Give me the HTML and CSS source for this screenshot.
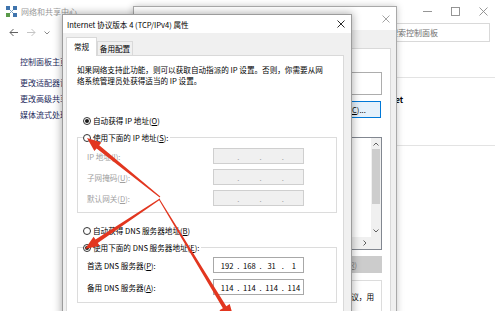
FILE: index.html
```html
<!DOCTYPE html>
<html lang="zh-CN">
<head>
<meta charset="UTF-8">
<title>Internet 协议版本 4 (TCP/IPv4) 属性</title>
<link rel="stylesheet" href="styles.css">
</head>
<body>
<div class="desk">

    <!-- 网络和共享中心 -->
    <div class="win main-win">
        <div class="bar">
            <svg class="app-ico" viewBox="0 0 11 11">
                <path d="M2.5 2.5L8.5 8.5M8.5 2.5L2.5 8.5" stroke="#7fa7c9" stroke-width="1"/>
                <rect x="0" y="0" width="4" height="4" fill="#3f74ad"/>
                <rect x="7" y="0" width="4" height="4" fill="#3f74ad"/>
                <rect x="0" y="7" width="4" height="4" fill="#5a9a4a"/>
                <rect x="7" y="7" width="4" height="4" fill="#3f74ad"/>
            </svg>
            <span class="bar-title">网络和共享中心</span>
            <div class="ctrls">
                <span class="ctrl"><svg viewBox="0 0 9 9"><path d="M0 4.5h9"/></svg></span>
                <span class="ctrl"><svg viewBox="0 0 9 9"><rect x="0.5" y="0.5" width="8" height="8"/></svg></span>
                <span class="ctrl"><svg viewBox="0 0 9 9"><path d="M0.5 0.5l8 8M8.5 0.5l-8 8"/></svg></span>
            </div>
        </div>
        <div class="nav">
            <svg class="nav-ico back" viewBox="0 0 9 9"><path d="M9 4.5H1M4.5 1L1 4.5 4.5 8"/></svg>
            <svg class="nav-ico fwd" viewBox="0 0 9 9"><path d="M0 4.5h8M4.5 1L8 4.5 4.5 8"/></svg>
            <svg class="nav-ico chev" viewBox="0 0 6 4"><path d="M0.5 0.5l2.5 2.5 2.5-2.5"/></svg>
            <div class="search">搜索控制面板</div>
        </div>
        <div class="cp-body">
            <ul class="side">
                <li class="home">控制面板主页</li>
                <li>更改适配器设置</li>
                <li>更改高级共享设置</li>
                <li>媒体流式处理选项</li>
            </ul>
            <div class="cp-main">
                <div class="rule"></div>
                <div class="conn">
                    <b>Internet</b>
                    <span class="conn-link">以太网</span>
                </div>
                <div class="rule second"></div>
            </div>
        </div>
    </div>

    <!-- 以太网 属性 -->
    <div class="win prop-win">
        <div class="bar prop-bar">
            <span class="bar-title">以太网 属性</span>
            <span class="x-btn dim"><svg viewBox="0 0 8 8"><path d="M0.5 0.5l7 7M7.5 0.5l-7 7"/></svg></span>
        </div>
        <div class="prop-body">
            <div class="tabs">
                <span class="tab on">网络</span>
                <span class="tab">共享</span>
            </div>
            <div class="panel prop-panel">
                <p class="lbl">连接时使用:</p>
                <div class="adapter">Realtek PCIe GbE Family Controller</div>
                <div class="btn-row"><span class="btn focus">配置(<u>C</u>)...</span></div>
                <p class="lbl">此连接使用下列项目(<u>O</u>):</p>
                <div class="listbox">
                    <ul class="items">
                        <li>Microsoft 网络客户端</li>
                        <li>Microsoft 网络的文件和打印机共享</li>
                        <li>QoS 数据包计划程序</li>
                        <li>Internet 协议版本 4 (TCP/IPv4)</li>
                    </ul>
                    <div class="vscroll">
                        <svg class="sc-arrow" viewBox="0 0 6 4"><path d="M0.5 3.5l2.5-2.5 2.5 2.5"/></svg>
                        <span class="thumb"></span>
                        <svg class="sc-arrow down" viewBox="0 0 6 4"><path d="M0.5 0.5l2.5 2.5 2.5-2.5"/></svg>
                    </div>
                    <div class="hscroll">
                        <svg class="sc-arrow right" viewBox="0 0 4 6"><path d="M0.5 0.5l2.5 2.5-2.5 2.5"/></svg>
                    </div>
                    <div class="corner"></div>
                </div>
                <div class="btn-row"><span class="btn grey">属性(<u>R</u>)</span></div>
                <div class="desc-box">传输控制协议/Internet 协议。该协议是默认的广域网络协议，用</div>
            </div>
        </div>
    </div>

    <!-- Internet 协议版本 4 (TCP/IPv4) 属性 -->
    <div class="win dlg">
        <div class="bar dlg-bar">
            <span class="dlg-title">Internet 协议版本 4 (TCP/IPv4) 属性</span>
            <span class="x-btn"><svg viewBox="0 0 8 8"><path d="M0.5 0.5l7 7M7.5 0.5l-7 7"/></svg></span>
        </div>
        <div class="dlg-body">
            <div class="tabs">
                <span class="tab on">常规</span>
                <span class="tab">备用配置</span>
            </div>
            <div class="panel dlg-panel">
                <p class="intro">如果网络支持此功能，则可以获取自动指派的 IP 设置。否则，你需要从网<br>络系统管理员处获得适当的 IP 设置。</p>

                <div class="radio-row ip-auto"><span class="radio on"></span>自动获得 IP 地址(<u>O</u>)</div>
                <fieldset class="group ip-group">
                    <legend><span class="radio-row"><span class="radio"></span>使用下面的 IP 地址(<u>S</u>):</span></legend>
                    <div class="field-row off">
                        <span class="f-label">IP 地址(<u>I</u>):</span>
                        <span class="ipbox"><span></span><b>.</b><span></span><b>.</b><span></span><b>.</b><span></span></span>
                    </div>
                    <div class="field-row off">
                        <span class="f-label">子网掩码(<u>U</u>):</span>
                        <span class="ipbox"><span></span><b>.</b><span></span><b>.</b><span></span><b>.</b><span></span></span>
                    </div>
                    <div class="field-row off">
                        <span class="f-label">默认网关(<u>D</u>):</span>
                        <span class="ipbox"><span></span><b>.</b><span></span><b>.</b><span></span><b>.</b><span></span></span>
                    </div>
                </fieldset>

                <div class="radio-row dns-auto"><span class="radio"></span>自动获得 DNS 服务器地址(<u>B</u>)</div>
                <fieldset class="group dns-group">
                    <legend><span class="radio-row"><span class="radio on"></span>使用下面的 DNS 服务器地址(<u>E</u>):</span></legend>
                    <div class="field-row">
                        <span class="f-label">首选 DNS 服务器(<u>P</u>):</span>
                        <span class="ipbox"><span>192</span><b>.</b><span>168</span><b>.</b><span>31</span><b>.</b><span>1</span></span>
                    </div>
                    <div class="field-row">
                        <span class="f-label">备用 DNS 服务器(<u>A</u>):</span>
                        <span class="ipbox"><span>114</span><b>.</b><span>114</span><b>.</b><span>114</span><b>.</b><span>114</span></span>
                    </div>
                </fieldset>
            </div>
        </div>
    </div>

    <!-- 红色箭头 -->
    <svg class="arrows" viewBox="0 0 500 311">
        <polygon points="160.3,196.6 99.2,145.2 101.4,142.5 87,138 94.4,151.1 96.6,148.4 159.7,197.4"/>
        <polygon points="160.28,199.42 97.76,242.89 99.7,245.81 85,249 93.6,236.65 95.54,239.57 159.72,198.58"/>
        <polygon points="158.57,199.26 222.88,308.23 219.46,310.3 236,326 229.72,304.08 226.3,306.15 159.43,198.74"/>
    </svg>
</div>
</body>
</html>
```

FILE: styles.css
```css
* {
    margin: 0;
    padding: 0;
    box-sizing: border-box;
}

body {
    font-family: "Noto Sans CJK SC", "Noto Sans", sans-serif;
    font-size: 7.6px;
    color: #000;
    background: #fff;
    overflow: hidden;
}

.desk {
    position: relative;
    width: 500px;
    height: 311px;
    overflow: hidden;
    background: #fff;
}

.win {
    background: #fff;
}

/* title bars */
.bar {
    display: flex;
    align-items: center;
    background: #fff;
}

.bar-title {
    color: #9a9a9a;
    font-size: 8px;
    white-space: nowrap;
}

.x-btn {
    margin-left: auto;
    width: 20px;
    height: 100%;
    display: flex;
    align-items: center;
    justify-content: center;
}

.x-btn svg {
    width: 8px;
    height: 8px;
    fill: none;
    stroke: #111;
    stroke-width: 0.9;
}

.x-btn.dim svg {
    stroke: #9a9a9a;
}

/* background window */
.main-win {
    width: 500px;
    height: 311px;
}

.main-win .bar {
    height: 22px;
    padding-left: 6px;
}

.app-ico {
    width: 11px;
    height: 11px;
    margin-right: 4px;
}

.ctrls {
    margin-left: auto;
    display: flex;
    padding-right: 3px;
}

.ctrl {
    width: 28px;
    height: 22px;
    display: flex;
    align-items: center;
    justify-content: center;
}

.ctrl svg {
    width: 9px;
    height: 9px;
    fill: none;
    stroke: #8a8a8a;
    stroke-width: 0.9;
}

.nav {
    height: 21px;
    display: flex;
    align-items: center;
    padding-left: 9px;
}

.nav-ico {
    fill: none;
    stroke-width: 1;
}

.nav-ico.back {
    width: 9px;
    height: 9px;
    stroke: #606060;
}

.nav-ico.fwd {
    width: 9px;
    height: 9px;
    margin-left: 9px;
    stroke: #c4c4c4;
}

.nav-ico.chev {
    width: 6px;
    height: 4px;
    margin-left: 8px;
    stroke: #8a8a8a;
}

.search {
    margin-left: auto;
    margin-right: 10px;
    width: 115px;
    height: 19px;
    border: 1px solid #d9d9d9;
    color: #707070;
    font-size: 8px;
    line-height: 17px;
    padding-left: 14px;
    white-space: nowrap;
}

.cp-body {
    display: grid;
    grid-template-columns: 130px 1fr;
}

.side {
    list-style: none;
    padding: 11px 0 0 20px;
}

.side li {
    height: 16px;
    line-height: 16px;
    color: #1c2a5c;
    font-size: 8px;
    white-space: nowrap;
}

.side li.home {
    margin-bottom: 5px;
}

.cp-main {
    padding-right: 5px;
}

.rule {
    height: 1px;
    background: #e3e3e3;
    margin-top: 34px;
}

.rule.second {
    margin-top: 26px;
}

.conn {
    display: flex;
    flex-direction: column;
    margin: 15px 0 0 241px;
    line-height: 13px;
    font-size: 8px;
}

.conn-link {
    color: #1a66c2;
}

/* middle window */
.prop-win {
    position: absolute;
    z-index: 1;
    left: 133px;
    top: 6px;
    width: 264px;
    height: 330px;
    border: 1px solid #a9a9a9;
    box-shadow: 0 0 7px rgba(0, 0, 0, 0.22);
    display: flex;
    flex-direction: column;
}

.prop-bar {
    height: 23px;
    padding-left: 6px;
}

.prop-body {
    flex: 1;
    background: #f0f0f0;
    padding: 0 5px 0 6px;
    display: flex;
    flex-direction: column;
}

.tabs {
    display: flex;
    align-items: flex-end;
    position: relative;
    z-index: 1;
}

.tab {
    height: 14px;
    line-height: 13px;
    padding: 0 4px;
    border: 1px solid #d9d9d9;
    border-bottom: none;
    background: #f0f0f0;
    white-space: nowrap;
}

.tab.on {
    height: 19px;
    line-height: 17px;
    background: #fff;
    margin-bottom: -1px;
}

.prop-body .tabs {
    height: 18px;
}

.panel {
    flex: 1;
    background: #fff;
    border: 1px solid #d9d9d9;
}

.prop-panel {
    padding: 7px 8px 0 10px;
    display: flex;
    flex-direction: column;
    align-items: flex-end;
}

.lbl {
    align-self: stretch;
    line-height: 12px;
    white-space: nowrap;
}

.adapter {
    width: 220px;
    height: 23px;
    margin-top: 4px;
    border: 1px solid #adadad;
    padding: 0 4px;
    line-height: 21px;
    white-space: nowrap;
    overflow: hidden;
}

.btn-row {
    display: flex;
    justify-content: flex-end;
    margin-top: 6px;
}

.btn {
    display: inline-block;
    height: 17px;
    line-height: 15px;
    text-align: center;
    border: 1px solid #adadad;
    background: #e1e1e1;
    white-space: nowrap;
}

.btn.focus {
    width: 62px;
    margin-right: 1px;
    border-color: #0078d7;
    background: #e5f1fb;
}

.btn.grey {
    width: 75px;
    background: #cccccc;
    border-color: #cccccc;
    color: #838383;
}

.prop-panel .lbl + .listbox {
    margin-top: 1px;
}

.prop-panel .lbl:nth-of-type(2) {
    margin-top: 6px;
}

.listbox {
    width: 230px;
    height: 113px;
    border: 1px solid #828790;
    display: grid;
    grid-template-columns: 1fr 10px;
    grid-template-rows: 1fr 12px;
}

.items {
    list-style: none;
    padding: 2px 4px;
    line-height: 12px;
    white-space: nowrap;
    overflow: hidden;
}

.vscroll {
    background: #f0f0f0;
    display: flex;
    flex-direction: column;
    align-items: center;
    padding-top: 4px;
}

.sc-arrow {
    width: 6px;
    height: 4px;
    fill: none;
    stroke: #606060;
    stroke-width: 1;
}

.sc-arrow.down {
    margin-top: auto;
    margin-bottom: 4px;
}

.sc-arrow.right {
    width: 4px;
    height: 6px;
}

.thumb {
    width: 8px;
    height: 55px;
    margin-top: 3px;
    background: #cdcdcd;
}

.hscroll {
    background: #f0f0f0;
    display: flex;
    align-items: center;
    justify-content: flex-end;
    padding-right: 4px;
}

.corner {
    background: #f0f0f0;
}

.prop-panel .btn-row:last-of-type {
    margin-top: 8px;
}

.desc-box {
    width: 230px;
    height: 40px;
    margin-top: 7px;
    border: 1px solid #dcdcdc;
    border-bottom: none;
    padding: 10px 7px 0 0;
    line-height: 12px;
    text-align: right;
    white-space: nowrap;
    overflow: hidden;
}

/* TCP/IPv4 dialog */
.dlg {
    position: absolute;
    z-index: 2;
    left: 62px;
    top: 14px;
    width: 290px;
    height: 330px;
    border: 1px solid #9c9c9c;
    box-shadow: 0 0 8px 1px rgba(0, 0, 0, 0.3);
    display: flex;
    flex-direction: column;
}

.dlg-bar {
    height: 18px;
    padding-left: 4px;
}

.dlg-title {
    white-space: nowrap;
}

.dlg-body {
    flex: 1;
    background: #f0f0f0;
    padding: 4px 7px 0 3px;
    display: flex;
    flex-direction: column;
}

.dlg-body .tab {
    width: 36px;
    text-align: center;
    padding: 0;
}

.dlg-body .tab.on {
    width: 31px;
}

.dlg-panel {
    padding: 8px 6px 0 10px;
}

.intro {
    line-height: 11px;
    white-space: nowrap;
}

.radio-row {
    display: flex;
    align-items: center;
    height: 11px;
    line-height: 11px;
    white-space: nowrap;
}

.radio {
    width: 8px;
    height: 8px;
    margin-right: 2px;
    border: 1px solid #333;
    border-radius: 50%;
    background: #fff;
    display: flex;
    align-items: center;
    justify-content: center;
}

.radio.on::after {
    content: "";
    width: 4px;
    height: 4px;
    border-radius: 50%;
    background: #1a1a1a;
}

.ip-auto {
    margin: 29px 0 0 6px;
}

.dns-auto {
    margin: 12px 0 0 6px;
}

.group {
    border: 1px solid #dcdcdc;
    padding: 0 0 6px 5px;
    margin-top: 6px;
    min-width: 0;
}

.group legend {
    padding-right: 2px;
}

.ip-group .field-row:first-of-type {
    margin-top: 5px;
}

.ip-group .field-row + .field-row {
    margin-top: 5px;
}

.dns-group {
    padding-bottom: 7px;
}

.dns-group .field-row:first-of-type {
    margin-top: 4px;
}

.dns-group .field-row + .field-row {
    margin-top: 6px;
}

.field-row {
    display: flex;
    align-items: center;
    height: 16px;
}

.f-label {
    width: 130px;
    padding-left: 4px;
    white-space: nowrap;
}

.field-row.off .f-label {
    color: #a0a0a0;
}

.ipbox {
    display: flex;
    align-items: center;
    width: 91px;
    height: 16px;
    padding-left: 4px;
    border: 1px solid #a8a8a8;
    background: #fff;
}

.ipbox span {
    width: 18.25px;
    text-align: center;
}

.ipbox b {
    width: 4px;
    text-align: center;
    font-weight: normal;
}

.field-row.off .ipbox {
    background: #f0f0f0;
    border-color: #cfcfcf;
    color: #a0a0a0;
}

/* red arrows */
.arrows {
    position: absolute;
    z-index: 3;
    left: 0;
    top: 0;
    width: 500px;
    height: 311px;
    fill: #e2361f;
    pointer-events: none;
}
```
